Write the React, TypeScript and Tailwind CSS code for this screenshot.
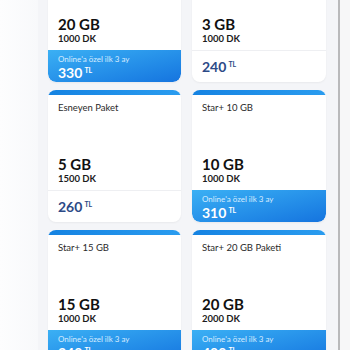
type Plan = {
  title: string;
  gb: string;
  dk: string;
  price: string;
  promo: boolean;
};

const plans: Plan[] = [
  { title: '', gb: '20 GB', dk: '1000 DK', price: '330', promo: true },
  { title: '', gb: '3 GB', dk: '1000 DK', price: '240', promo: false },
  { title: 'Esneyen Paket', gb: '5 GB', dk: '1500 DK', price: '260', promo: false },
  { title: 'Star+ 10 GB', gb: '10 GB', dk: '1000 DK', price: '310', promo: true },
  { title: 'Star+ 15 GB', gb: '15 GB', dk: '1000 DK', price: '340', promo: true },
  { title: 'Star+ 20 GB Paketi', gb: '20 GB', dk: '2000 DK', price: '400', promo: true },
];

function PlanCard({ plan }: { plan: Plan }) {
  return (
    <div className="h-[132px] flex flex-col bg-white rounded-lg shadow-[0_1px_2px_rgba(0,0,0,0.05)] overflow-hidden">
      {/* blue top strip */}
      <div className="h-[5px] bg-linear-to-r from-[#1583e2] to-[#2a9cef] rounded-t-lg" />

      <div className="flex-1 flex flex-col px-[10px]">
        <p className="mt-[7px] h-[12px] leading-[12px] text-[9.5px] text-[#2a2a2a]">{plan.title}</p>
        <div className="mt-auto pb-[6px]">
          <p className="h-[16px] leading-[16px] text-[15px] font-bold text-[#111]">{plan.gb}</p>
          <p className="mt-[1px] h-[11px] leading-[11px] text-[9.5px] font-bold text-[#1c1c1c]">{plan.dk}</p>
        </div>
      </div>

      {plan.promo ? (
        <div className="h-[32px] px-[10px] pt-[4px] bg-linear-to-br from-[#3bb0f4] to-[#1674df] rounded-b-lg">
          <p className="h-[10px] leading-[10px] text-[8px] text-[#d6ecff]">Online'a özel ilk 3 ay</p>
          <p className="mt-[1px] h-[16px] leading-[16px] text-[14px] font-bold text-white flex items-start">
            {plan.price}
            <span className="ml-[2px] text-[7px] leading-[10px] font-bold">TL</span>
          </p>
        </div>
      ) : (
        <div className="h-[32px] px-[10px] border-t border-[#eeeff2] flex items-center">
          <p className="h-[16px] leading-[16px] text-[14px] font-bold text-[#2c4a87] flex items-start">
            {plan.price}
            <span className="ml-[2px] text-[7px] leading-[10px] font-bold">TL</span>
          </p>
        </div>
      )}
    </div>
  );
}

export default function App() {
  return (
    <div
      className="w-[350px] h-[350px] overflow-hidden flex bg-white"
      style={{ fontFamily: 'Lato, "Noto Sans", sans-serif' }}
    >
      <div className="w-[38px] shrink-0 bg-linear-to-r from-[#fdfdfe] to-[#f8f9fb]" />

      <div className="w-[300px] shrink-0 bg-[#f4f5f8] pl-[10px] pr-[12px]">
        <div className="-mt-[50px] grid grid-cols-[133px_134px] gap-x-[11px] gap-y-[8px]">
          {plans.map((plan, i) => (
            <PlanCard key={i} plan={plan} />
          ))}
        </div>
      </div>

      {/* scrollbar */}
      <div className="w-[2px] shrink-0 bg-[#b9b9bb]" />
      <div className="flex-1 bg-[#f7f7f8]" />
    </div>
  );
}
